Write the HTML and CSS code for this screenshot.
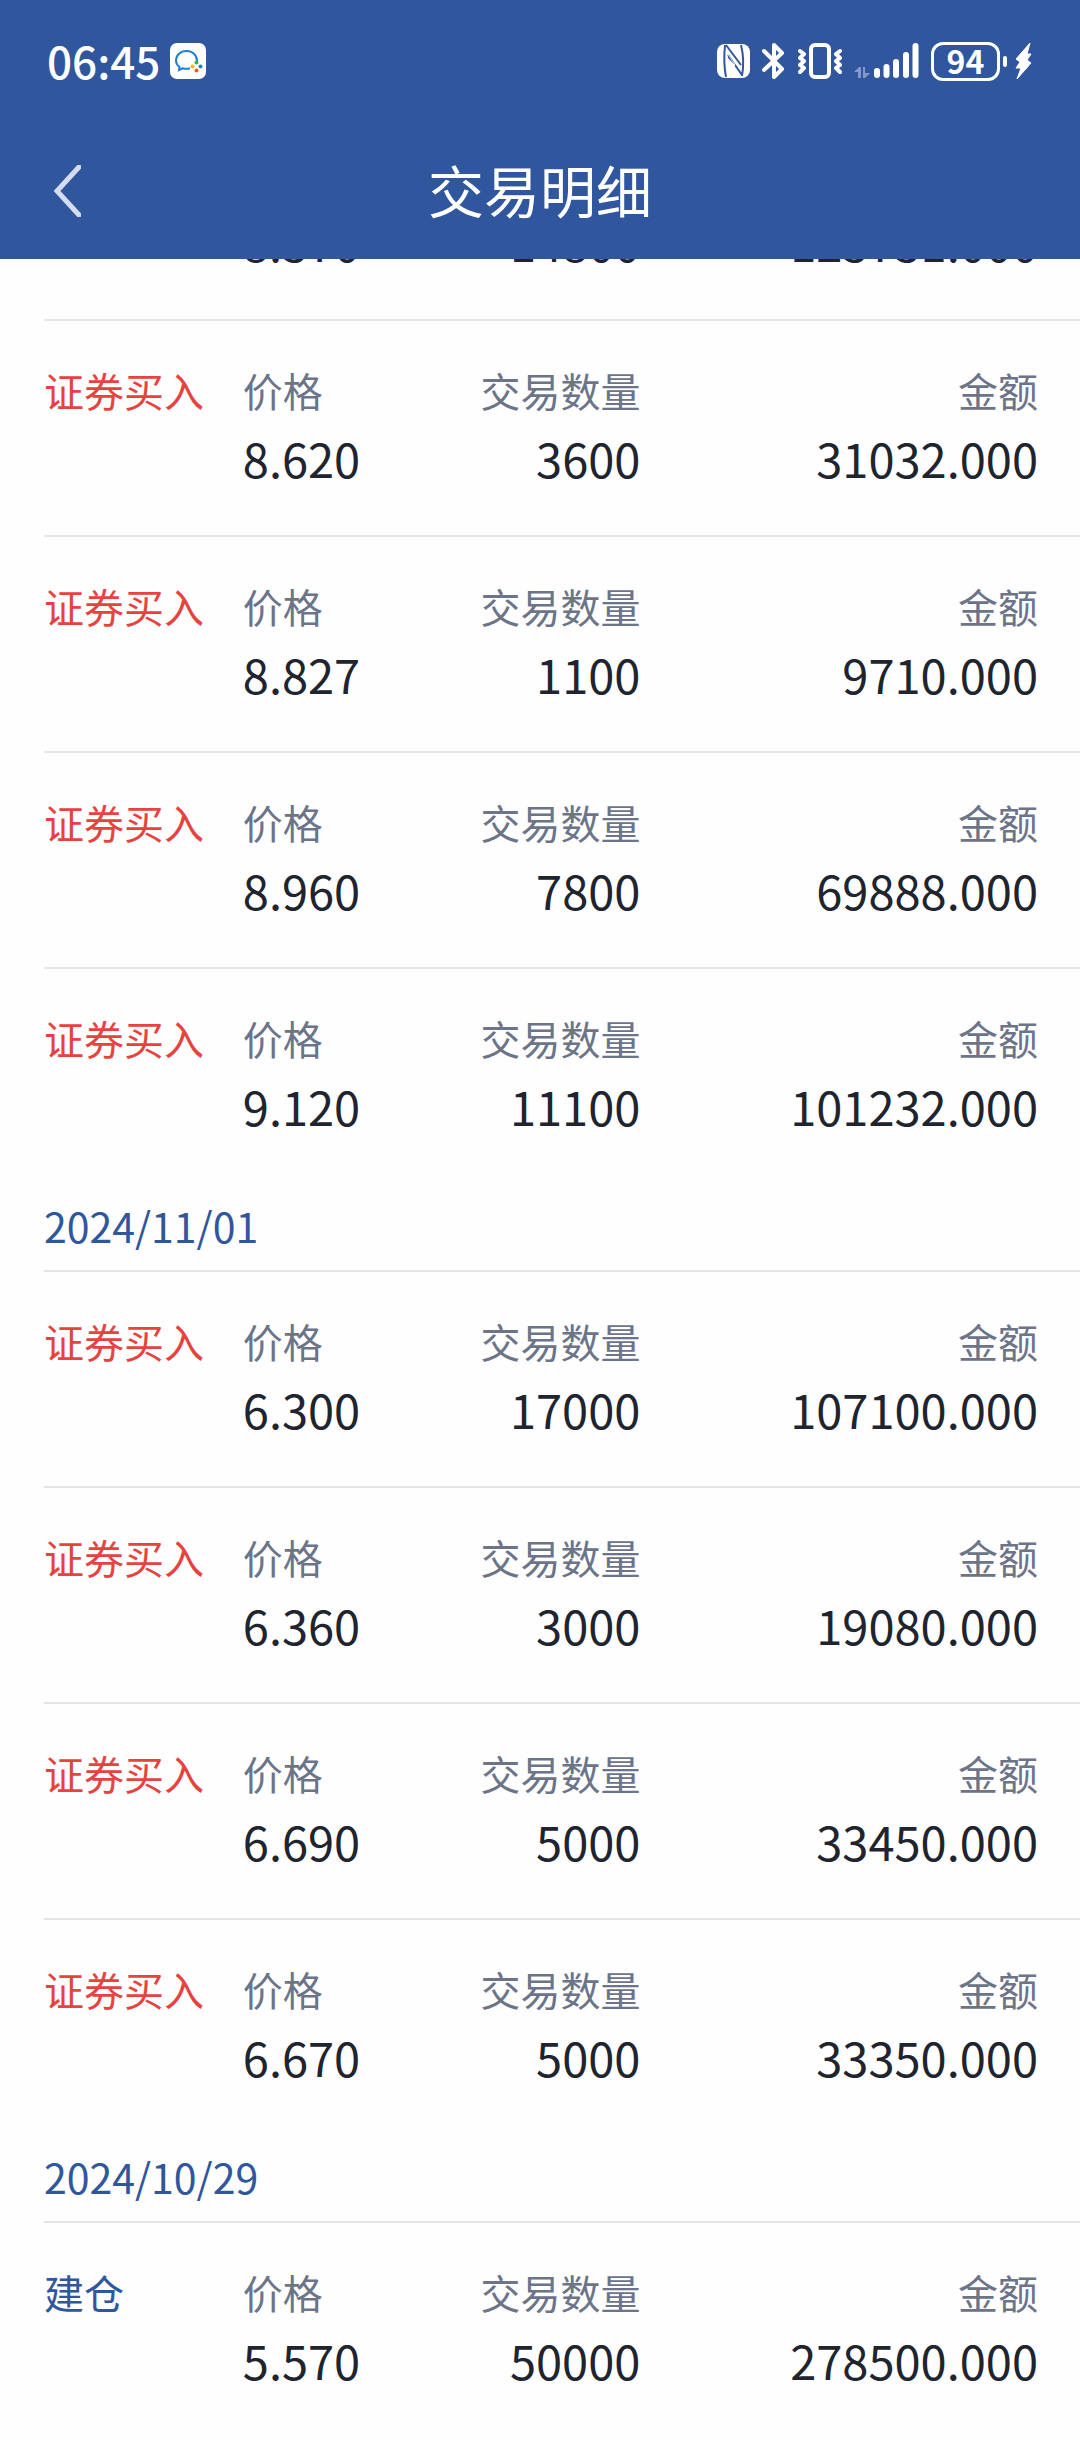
FILE: index.html
```
<!DOCTYPE html>
<html lang="zh-CN">
<head>
    <meta charset="UTF-8">
    <title>交易明细</title>
    <meta name="viewport" content="width=device-width, initial-scale=1">
    <link rel="stylesheet" href="styles.css">
</head>
<body>
    <header class="header">
        <div class="status-bar">
            <span class="time">06:45</span>
            <svg class="chat-icon" width="36" height="36" viewBox="0 0 36 36" aria-hidden="true">
                <rect width="36" height="36" rx="7" fill="#fff"/>
                <path d="M27 18c0-6-4.500-10-10.500-10S6 12 6 17.500c0 3 1.500 5 3.500 6.500l-.5 3 3.500-1.700c2.500.8 5 .7 7.500 0" fill="none" stroke="#1f7fd0" stroke-width="2"/>
                <circle cx="26.500" cy="19.500" r="2" fill="#3fae49"/>
                <circle cx="30.500" cy="23.500" r="2" fill="#1f7fd0"/>
                <circle cx="26.500" cy="27.500" r="2" fill="#ee5a2a"/>
                <circle cx="22.500" cy="23.500" r="2" fill="#f7b51c"/>
            </svg>
            <div class="status-icons">
                <svg width="33" height="34" viewBox="0 0 33 34" aria-hidden="true">
                    <rect width="33" height="34" rx="8" fill="#fff"/>
                    <path d="M8 1c-1 10-1 22 1 32M9 1l15 20M24 1c2 8 3 20 1 31M11 11l14 20" fill="none" stroke="#30569e" stroke-width="2"/>
                    <path d="M11 10l7 10v2c-3 3-4 7-4 11h-2c-1-8-1-16-1-23z" fill="#fff"/>
                    <path d="M11 11l9 13v-1l-9-9z" fill="#30569e"/>
                </svg>
                <svg class="bluetooth" width="24" height="38" viewBox="0 0 24 38" aria-hidden="true">
                    <path d="M2 9l18 18-8 8V3l8 8L2 28" fill="none" stroke="#fff" stroke-width="4" stroke-linejoin="round" stroke-linecap="round"/>
                </svg>
                <svg class="vibrate" width="44" height="36" viewBox="0 0 44 36" aria-hidden="true">
                    <rect x="13" y="2" width="18" height="32" rx="4" fill="none" stroke="#fff" stroke-width="4"/>
                    <path d="M2 8l4 3-4 4 4 3-4 4 4 3-4 4M42 8l-4 3 4 4-4 3 4 4-4 3 4 4" fill="none" stroke="#fff" stroke-width="4" stroke-linejoin="round" stroke-linecap="round"/>
                </svg>
                <svg class="signal" width="65" height="36" viewBox="0 0 65 36" aria-hidden="true">
                    <path d="M0 29l5-5h2v11H4v-6zM9 24h2v6h5l-5 5H9z" fill="#8299c9"/>
                    <path d="M23 28v4M32.500 24v8M42 19v13M52 12v20M61.500 3v29" stroke="#fff" stroke-width="6" stroke-linecap="round"/>
                </svg>
                <span class="battery">94</span>
                <svg class="battery-tip" width="4" height="11" viewBox="0 0 4 11" aria-hidden="true">
                    <rect width="4" height="11" rx="2" fill="#fff"/>
                </svg>
                <svg class="bolt" width="17" height="38" viewBox="0 0 17 38" aria-hidden="true">
                    <path d="M15 1L1 17l4 3-4 6h5L2 37l14-16-4-3 4-6h-4z" fill="#fff" stroke="#fff" stroke-linejoin="round"/>
                </svg>
            </div>
        </div>
        <div class="title-bar">
            <button class="back" type="button" aria-label="返回">
                <svg width="28" height="52" viewBox="0 0 28 52" aria-hidden="true">
                    <path d="M26 2L4 26l22 24" fill="none" stroke="#d5dbf0" stroke-width="5" stroke-linecap="round"/>
                </svg>
            </button>
            <h1>交易明细</h1>
        </div>
    </header>

    <main class="list">
        <section>
            <dl class="row">
                <dt class="type buy">证券买入</dt>
                <div><dt>价格</dt><dd>8.370</dd></div>
                <div><dt>交易数量</dt><dd>14800</dd></div>
                <div><dt>金额</dt><dd>123731.000</dd></div>
            </dl>
            <dl class="row">
                <dt class="type buy">证券买入</dt>
                <div><dt>价格</dt><dd>8.620</dd></div>
                <div><dt>交易数量</dt><dd>3600</dd></div>
                <div><dt>金额</dt><dd>31032.000</dd></div>
            </dl>
            <dl class="row">
                <dt class="type buy">证券买入</dt>
                <div><dt>价格</dt><dd>8.827</dd></div>
                <div><dt>交易数量</dt><dd>1100</dd></div>
                <div><dt>金额</dt><dd>9710.000</dd></div>
            </dl>
            <dl class="row">
                <dt class="type buy">证券买入</dt>
                <div><dt>价格</dt><dd>8.960</dd></div>
                <div><dt>交易数量</dt><dd>7800</dd></div>
                <div><dt>金额</dt><dd>69888.000</dd></div>
            </dl>
            <dl class="row">
                <dt class="type buy">证券买入</dt>
                <div><dt>价格</dt><dd>9.120</dd></div>
                <div><dt>交易数量</dt><dd>11100</dd></div>
                <div><dt>金额</dt><dd>101232.000</dd></div>
            </dl>
        </section>

        <section>
            <h2>2024/11/01</h2>
            <dl class="row">
                <dt class="type buy">证券买入</dt>
                <div><dt>价格</dt><dd>6.300</dd></div>
                <div><dt>交易数量</dt><dd>17000</dd></div>
                <div><dt>金额</dt><dd>107100.000</dd></div>
            </dl>
            <dl class="row">
                <dt class="type buy">证券买入</dt>
                <div><dt>价格</dt><dd>6.360</dd></div>
                <div><dt>交易数量</dt><dd>3000</dd></div>
                <div><dt>金额</dt><dd>19080.000</dd></div>
            </dl>
            <dl class="row">
                <dt class="type buy">证券买入</dt>
                <div><dt>价格</dt><dd>6.690</dd></div>
                <div><dt>交易数量</dt><dd>5000</dd></div>
                <div><dt>金额</dt><dd>33450.000</dd></div>
            </dl>
            <dl class="row">
                <dt class="type buy">证券买入</dt>
                <div><dt>价格</dt><dd>6.670</dd></div>
                <div><dt>交易数量</dt><dd>5000</dd></div>
                <div><dt>金额</dt><dd>33350.000</dd></div>
            </dl>
        </section>

        <section>
            <h2>2024/10/29</h2>
            <dl class="row">
                <dt class="type open">建仓</dt>
                <div><dt>价格</dt><dd>5.570</dd></div>
                <div><dt>交易数量</dt><dd>50000</dd></div>
                <div><dt>金额</dt><dd>278500.000</dd></div>
            </dl>
        </section>
    </main>
</body>
</html>
```
FILE: styles.css
```
:root {
    --blue: #30569e;
    --red: #e64340;
    --label: #6b7489;
    --text: #20242f;
    --line: #e5e5e6;
}
body {
    margin: 0;
    background: #fefefe;
    color: var(--text);
    font-family: "Noto Sans CJK SC", sans-serif;
}
h1, h2, dl, dd {
    margin: 0;
    font-weight: 400;
}

/* Header stays on top, the list scrolls under it */
.header {
    position: sticky;
    top: 0;
    z-index: 1;
    background: var(--blue);
    color: #fff;
}
.status-bar {
    display: flex;
    align-items: center;
    height: 122px;
    padding: 0 48px 0 47px;
}
.time {
    padding-bottom: 2px;
    font-size: 44px;
    line-height: 60px;
    font-weight: 500;
}
.chat-icon {
    margin-left: 10px;
}
.status-icons {
    display: flex;
    align-items: center;
    margin-left: auto;
}
.bluetooth,
.vibrate,
.signal,
.battery {
    margin-left: 12px;
}
.battery {
    box-sizing: border-box;
    width: 69px;
    height: 39px;
    border: 3px solid #fff;
    border-radius: 12px;
    font-size: 32px;
    line-height: 31px;
    font-weight: 700;
    text-align: center;
}
.battery-tip {
    margin-left: 3px;
}
.bolt {
    margin-left: 8px;
}
.title-bar {
    display: grid;
    grid-template-columns: 1fr auto 1fr;
    align-items: center;
    height: 137px;
    padding: 0 53px;
}
.back {
    display: flex;
    justify-self: start;
    padding: 0;
    border: 0;
    background: none;
    cursor: pointer;
}
h1 {
    padding-bottom: 4px;
    font-size: 56px;
    line-height: 80px;
}

/* Scrolled so that the first row is mostly behind the header */
.list {
    overflow: hidden;
    padding-left: 44px;
}
.list section:first-child {
    margin-top: -156px;
}
.row {
    display: grid;
    grid-template-columns: 1fr 2fr 2fr;
    padding: 36px 42px 42px 0;
    border-top: 2px solid var(--line);
}
.row div {
    text-align: right;
}
.row div:nth-of-type(1) {
    grid-column: 2;
    grid-row: 1;
    text-align: left;
}
.row div:nth-of-type(2) {
    grid-column: 2;
    grid-row: 1;
}
.row dt {
    color: var(--label);
    font-size: 40px;
    line-height: 66px;
}
.row dd {
    font-size: 47px;
    line-height: 70px;
}
.row .buy {
    color: var(--red);
}
.row .open {
    color: var(--blue);
}
h2 {
    padding: 12px 0 15px;
    color: var(--blue);
    font-size: 41px;
    line-height: 60px;
}
```
